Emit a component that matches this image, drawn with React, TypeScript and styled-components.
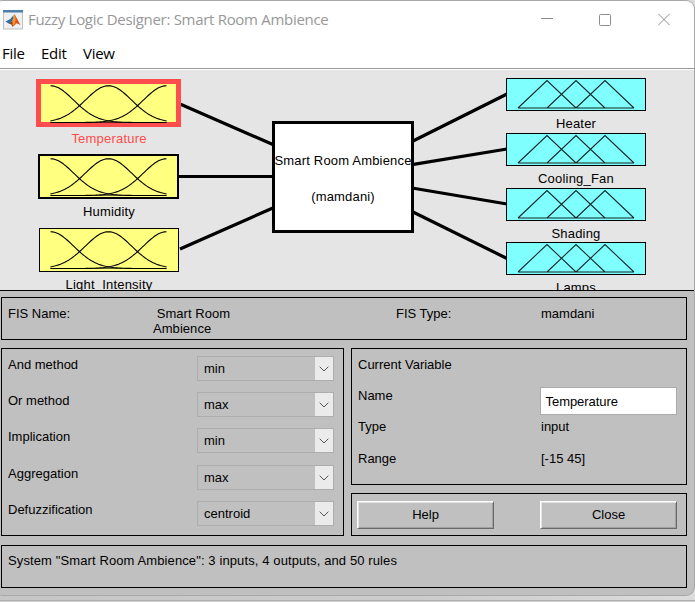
import React from "react";
import styled, { createGlobalStyle } from "styled-components";

const GlobalStyle = createGlobalStyle`
  * { box-sizing: border-box; }
  html, body { margin: 0; padding: 0; }
  body {
    width: 695px;
    height: 602px;
    overflow: hidden;
    background: #cbcbcb;
    font: 13px/15px "Liberation Sans", Arial, sans-serif;
    color: #000;
  }
`;

const Desktop = styled.div`
  width: 695px;
  height: 602px;
  display: flex;
  flex-direction: column;
  justify-content: space-between;
  background: linear-gradient(90deg, #c6c6c6, #cccccc 60%, #dcdcdc);
`;

const DesktopEdge = styled.div`
  height: 2px;
  background: #d2d2d2;
  border-top: 1px solid #b0b0b0;
`;

const Window = styled.main`
  width: 695px;
  height: 596px;
  display: flex;
  flex-direction: column;
  overflow: hidden;
  background: #c0c0c0;
  border: solid #a8a8a8;
  border-width: 1px 1px 1px 0;
  border-radius: 2px 9px 9px 2px;
`;

const TitleBar = styled.header`
  height: 38px;
  display: flex;
  align-items: center;
  padding: 0 0 1px 3px;
  background: #fff;
`;

const Title = styled.h1`
  flex: 1;
  margin: 0 0 1px 5px;
  font: 400 15px/20px "Open Sans", "Noto Sans", sans-serif;
  letter-spacing: -0.3px;
  color: #989898;
  white-space: nowrap;
`;

const Controls = styled.div`
  display: flex;
  gap: 45px;
  padding-right: 23px;
  svg { display: block; }
`;

const MenuBar = styled.nav`
  height: 31px;
  display: flex;
  align-items: flex-start;
  gap: 16.5px;
  padding: 4px 0 0 2px;
  background: #fff;
  border-bottom: 1px solid #fff;
  box-shadow: inset 0 -1px 0 #999;
  font: 15px/20px "Open Sans", "Noto Sans", sans-serif;
`;

const MenuItem = styled.span`
  letter-spacing: -0.3px;
`;

const Diagram = styled.section`
  position: relative;
  height: 221px;
  overflow: hidden;
  background: #e5e5e5;
  border-bottom: 1px solid #000;
`;

const Wires = styled.svg`
  position: absolute;
  inset: 0;
`;

interface BoxProps {
  $x: number;
  $y: number;
  $w: number;
  $h: number;
  $fill: string;
  $line: string;
  $inner: number;
  $outer: number;
}

const VariableBox = styled.div<BoxProps>`
  position: absolute;
  left: ${(p) => p.$x}px;
  top: ${(p) => p.$y}px;
  width: ${(p) => p.$w}px;
  height: ${(p) => p.$h}px;
  background: ${(p) => p.$fill};
  border: ${(p) => p.$inner}px solid ${(p) => p.$line};
  outline: ${(p) => p.$outer}px solid ${(p) => p.$line};
  svg { display: block; margin: -${(p) => p.$inner}px; }
`;

const VariableLabel = styled.div<{ $x: number; $y: number; $color: string }>`
  position: absolute;
  left: ${(p) => p.$x}px;
  top: ${(p) => p.$y}px;
  width: 140px;
  text-align: center;
  letter-spacing: 0.2px;
  color: ${(p) => p.$color};
`;

const SystemBox = styled.div`
  position: absolute;
  left: 272px;
  top: 51px;
  width: 142px;
  height: 112px;
  display: flex;
  flex-direction: column;
  align-items: center;
  gap: 21px;
  padding-top: 29px;
  border: 3px solid #000;
  background: #fff;
  white-space: nowrap;
  letter-spacing: 0.18px;
`;

const Panels = styled.section`
  flex: 1;
  display: grid;
  grid-template-columns: 343px 336px;
  grid-template-rows: 43px 137px 43px 44px;
  column-gap: 7px;
  padding: 6px 0 0 1px;
  row-gap: 8px;
`;

const Panel = styled.div`
  border: 1px solid #000;
`;

const InfoPanel = styled(Panel)`
  grid-column: 1 / -1;
  display: grid;
  grid-template-columns: 145px 243px 145px 1fr;
  padding: 8px 0 0 6px;
`;

const FisName = styled.div`
  height: 27px;
  width: 84px;
  overflow: hidden;
  white-space: pre;
  line-height: 15px;
  letter-spacing: 0.05px;
`;

const MethodsPanel = styled(Panel)`
  grid-row: 2 / 4;
  padding: 7px 9px 0 6px;
`;

const MethodRow = styled.div<{ $h: number }>`
  height: ${(p) => p.$h}px;
  display: flex;
  justify-content: space-between;
  align-items: flex-start;
`;

const Label = styled.span`
  white-space: nowrap;
  margin-top: 1px;
`;

const Select = styled.div`
  width: 137px;
  height: 25px;
  display: flex;
  justify-content: space-between;
  align-items: center;
  padding-left: 6px;
  border: 1px solid #adadad;
`;

const Arrow = styled.div`
  width: 18px;
  height: 23px;
  display: grid;
  place-items: center;
  background: #ebebeb;
  svg { margin-right: 1px; }
`;

const VariablePanel = styled(Panel)`
  padding: 8px 9px 0 6px;
`;

const Field = styled.div<{ $h: number }>`
  height: ${(p) => p.$h}px;
  display: grid;
  grid-template-columns: 182px 137px;
  align-items: start;
`;

const Value = styled.span`
  padding-left: 1px;
`;

const NameInput = styled.div`
  height: 28px;
  padding: 6px 4.5px;
  margin: -1px 0 0;
  background: #fff;
  border: 1px solid #ababab;
  letter-spacing: -0.05px;
`;

const ButtonPanel = styled(Panel)`
  display: flex;
  justify-content: space-between;
  padding: 7px 9px 0 5px;
`;

const PushButton = styled.button`
  width: 137px;
  height: 28px;
  padding: 0 0 1px;
  font: inherit;
  color: #000;
  background: #c0c0c0;
  border: 1px solid;
  border-color: #fff #696969 #696969 #fff;
  box-shadow: inset 1px 1px 0 #e3e3e3, inset -1px -1px 0 #a0a0a0;
  border-radius: 0;
`;

const StatusPanel = styled(Panel)`
  grid-column: 1 / -1;
  margin-top: 1px;
  padding: 7px 6px;
  white-space: nowrap;
  letter-spacing: 0.11px;
`;

const bell = (center: number) =>
  Array.from({ length: 59 }, (_, i) => {
    const x = 11.5 + i * 2;
    const y = 40.5 - 36.8 * Math.exp(-((x - center) ** 2) / (2 * 23.2 ** 2));
    return `${i ? "L" : "M"}${x} ${y.toFixed(2)}`;
  }).join("");

const BellCurves = () => (
  <svg width="140" height="43" fill="none" stroke="#000" strokeWidth="1.1">
    <path d={bell(11.5)} />
    <path d={bell(69.5)} />
    <path d={bell(127.5)} />
    <path d="M11.5 40.5H127.5" strokeWidth=".6" />
  </svg>
);

const Triangles = () => (
  <svg width="140" height="33" fill="none" stroke="#000" strokeOpacity=".85" strokeWidth="1.05">
    <path d="M12 30 41 2.5 70 30M41 30 70 2.5 99 30M70 30 99 2.5 128 30M12 30H128" />
  </svg>
);

const MatlabIcon = () => (
  <svg width="20" height="20" viewBox="0 0 20 20">
    <defs>
      <linearGradient id="flame" x1="0" y1="0" x2="1" y2="0">
        <stop offset="0" stopColor="#7a2418" />
        <stop offset=".5" stopColor="#e8641b" />
        <stop offset="1" stopColor="#c4401a" />
      </linearGradient>
    </defs>
    <rect x=".5" y=".5" width="19" height="18.5" fill="#eef0f1" stroke="#b9bfc4" />
    <rect x="0" y="0" width="20" height="2.5" fill="#4b7faa" />
    <path d="M2.5 11.5 7 9.3 10.8 5 9.5 10.5 6.5 14z" fill="#2d6da3" />
    <path d="M6.5 14 9.5 10.5 11.5 4 14 8.5 17.3 15 13.8 13.2 9.5 17 8.2 14.2z" fill="url(#flame)" />
    <path d="M11.5 4.5 12.5 9 11.5 14 9.7 15.8 9.5 11z" fill="#f59b2c" />
  </svg>
);

const inputs = [
  { name: "Temperature", y: 12, w: 139, h: 42, labelY: 61, inner: 2, outer: 3, color: "#ff4c4c" },
  { name: "Humidity", y: 85, w: 139, h: 43, labelY: 134, inner: 1, outer: 1, color: "#000" },
  { name: "Light_Intensity", y: 158, w: 140, h: 44, labelY: 207, inner: 1, outer: 0, color: "#000" },
];

const outputs = [
  { name: "Heater", y: 8, labelY: 46 },
  { name: "Cooling_Fan", y: 63, labelY: 101 },
  { name: "Shading", y: 118, labelY: 156 },
  { name: "Lamps", y: 172, labelY: 210 },
];

const methods = [
  { label: "And method", value: "min", h: 36 },
  { label: "Or method", value: "max", h: 36 },
  { label: "Implication", value: "min", h: 37 },
  { label: "Aggregation", value: "max", h: 36 },
  { label: "Defuzzification", value: "centroid", h: 25 },
];

export default function App() {
  return (
    <>
      <GlobalStyle />
      <Desktop>
        <Window>
          <TitleBar>
            <MatlabIcon />
            <Title>Fuzzy Logic Designer: Smart Room Ambience</Title>
            <Controls>
              <svg width="13" height="13" stroke="#8c8c8c"><path d="M0 5.5H12" /></svg>
              <svg width="14" height="13" fill="none" stroke="#8c8c8c"><rect x=".5" y="1.5" width="11" height="11" rx="1" /></svg>
              <svg width="13" height="13" stroke="#8c8c8c"><path d="M.3 .8 11.7 12.2M11.7 .8 .3 12.2" /></svg>
            </Controls>
          </TitleBar>
          <MenuBar>
            <MenuItem>File</MenuItem>
            <MenuItem>Edit</MenuItem>
            <MenuItem>View</MenuItem>
          </MenuBar>

          <Diagram>
            <Wires width="694" height="220" stroke="#000" strokeWidth="3.2">
              <path d="M180 34 274 75M178 106.5H274M180 179 274 137.5M412 71.5 507 24M412 94.7 507 79M412 118 507 134M412 141.5 507 188.5" />
            </Wires>
            {inputs.map((v) => (
              <React.Fragment key={v.name}>
                <VariableBox
                  $x={39} $y={v.y} $w={v.w} $h={v.h}
                  $fill="#ffff80"
                  $line={v.color}
                  $inner={v.inner} $outer={v.outer}
                >
                  <BellCurves />
                </VariableBox>
                <VariableLabel $x={39} $y={v.labelY} $color={v.color}>{v.name}</VariableLabel>
              </React.Fragment>
            ))}
            <SystemBox>
              <span>Smart Room Ambience</span>
              <span>(mamdani)</span>
            </SystemBox>
            {outputs.map((v) => (
              <React.Fragment key={v.name}>
                <VariableBox $x={506} $y={v.y} $w={140} $h={33} $fill="#80ffff" $line="#000" $inner={1} $outer={0}>
                  <Triangles />
                </VariableBox>
                <VariableLabel $x={506} $y={v.labelY} $color="#000">{v.name}</VariableLabel>
              </React.Fragment>
            ))}
          </Diagram>

          <Panels>
            <InfoPanel>
              <span>FIS Name:</span>
              <FisName>{" Smart Room\nAmbience"}</FisName>
              <span>FIS Type:</span>
              <span>mamdani</span>
            </InfoPanel>
            <MethodsPanel>
              {methods.map((m) => (
                <MethodRow key={m.label} $h={m.h}>
                  <Label>{m.label}</Label>
                  <Select>
                    {m.value}
                    <Arrow>
                      <svg width="10" height="6" fill="none" stroke="#555"><path d="M.7 .7 5 5 9.3 .7" /></svg>
                    </Arrow>
                  </Select>
                </MethodRow>
              ))}
            </MethodsPanel>
            <VariablePanel>
              <Field $h={31}><span>Current Variable</span></Field>
              <Field $h={31}><span>Name</span><NameInput>Temperature</NameInput></Field>
              <Field $h={32}><span>Type</span><Value>input</Value></Field>
              <Field $h={15}><span>Range</span><Value>[-15 45]</Value></Field>
            </VariablePanel>
            <ButtonPanel>
              <PushButton>Help</PushButton>
              <PushButton>Close</PushButton>
            </ButtonPanel>
            <StatusPanel>
              System "Smart Room Ambience": 3 inputs, 4 outputs, and 50 rules
            </StatusPanel>
          </Panels>
        </Window>
        <DesktopEdge />
      </Desktop>
    </>
  );
}
